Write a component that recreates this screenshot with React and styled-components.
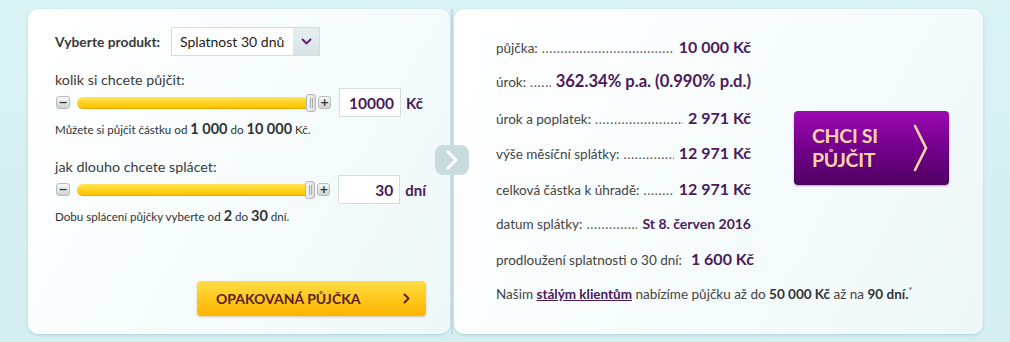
import React from 'react';
import styled, { createGlobalStyle } from 'styled-components';

const Global = createGlobalStyle`
  html, body { margin: 0; padding: 0; }
  body {
    width: 1010px;
    height: 342px;
    overflow: hidden;
    background: linear-gradient(180deg, #d9f2f4 0%, #d4eef1 100%);
    font-family: Lato, "Open Sans", sans-serif;
    color: #3a3a3a;
  }
`;

const Page = styled.div`
  display: flex;
  align-items: stretch;
  padding: 9px 0 0 28px;
  height: 325px;
`;

const Card = styled.div`
  box-sizing: border-box;
  border-radius: 10px;
  background: linear-gradient(120deg, #ffffff 0%, #f7fcfd 45%, #eef8f9 100%);
  box-shadow: 0 1px 3px rgba(40, 110, 120, 0.22);
  display: flex;
  flex-direction: column;
`;

const LeftCard = styled(Card)`
  width: 422px;
  padding: 18px 24px 18px 27px;
`;

const RightCard = styled(Card)`
  width: 529px;
  padding: 20px 0 0 42px;
`;

const Divider = styled.div`
  width: 4px;
  display: flex;
  flex-direction: column;
  align-items: center;
`;

const DividerLine = styled.div`
  width: 2px;
  background: #c6d9dc;
  flex: ${p => (p.$grow ? 1 : 'none')};
  height: ${p => (p.$grow ? 'auto' : '136px')};
`;

const Badge = styled.div`
  position: relative;
  z-index: 2;
  flex: none;
  width: 34px;
  height: 30px;
  border-radius: 8px;
  background: #c9dbde;
  display: flex;
  align-items: center;
  justify-content: center;
`;

const ProductRow = styled.div`
  display: flex;
  align-items: center;
  gap: 11px;
  height: 29px;
`;

const ProductLabel = styled.span`
  font-weight: 700;
  font-size: 13.8px;
  color: #3a3a3a;
`;

const Select = styled.div`
  box-sizing: border-box;
  width: 149px;
  height: 29px;
  border: 1px solid #d3dcdd;
  background: #fff;
  display: flex;
  align-items: stretch;
`;

const SelectText = styled.span`
  flex: 1;
  display: flex;
  align-items: center;
  padding-left: 8px;
  font-size: 14px;
  color: #222;
`;

const SelectArrow = styled.span`
  width: 26px;
  background: linear-gradient(180deg, #e6eff0 0%, #d5e3e5 100%);
  display: flex;
  align-items: center;
  justify-content: center;
`;

const FieldLabel = styled.div`
  margin-top: ${p => p.$mt}px;
  font-size: 14.3px;
  line-height: 17px;
  color: #3a3a3a;
`;

const SliderRow = styled.div`
  display: flex;
  align-items: center;
  height: 29px;
`;

const StepButton = styled.span`
  box-sizing: border-box;
  width: ${p => (p.$plus ? 13 : 14)}px;
  height: 13px;
  margin-left: ${p => (p.$plus ? 5 : 1)}px;
  border: 1px solid #b9bcbd;
  border-radius: 3px;
  background: linear-gradient(180deg, #f7f7f7 0%, #d0d2d2 100%);
  display: flex;
  align-items: center;
  justify-content: center;
  font-family: "DejaVu Sans", sans-serif;
  font-weight: 700;
  font-size: 11px;
  line-height: 1;
  color: #333;
`;

const Track = styled.div`
  position: relative;
  width: 236px;
  height: 12px;
  margin-left: 7px;
  border-radius: 6px;
  background: linear-gradient(180deg, #ffe55a 0%, #ffd21c 50%, #ffbc00 100%);
  box-shadow: inset 0 -1px 0 rgba(200, 130, 0, 0.35);
`;

const Thumb = styled.span`
  position: absolute;
  right: -3px;
  top: -3px;
  box-sizing: border-box;
  width: 10px;
  height: 18px;
  border: 1px solid #b4b7b8;
  border-radius: 3px;
  background: linear-gradient(90deg, #f4f4f4, #dcdede);
  display: flex;
  justify-content: center;
  gap: 1px;
  padding-top: 3px;
  &::before, &::after {
    content: '';
    width: 1px;
    height: 10px;
    background: #a9acad;
  }
`;

const ValueBox = styled.div`
  box-sizing: border-box;
  width: 62px;
  height: 29px;
  margin-left: 8px;
  border: 1px solid #d6dddf;
  background: #fff;
  display: flex;
  align-items: center;
  justify-content: flex-end;
  padding-right: 6px;
  font-weight: 700;
  font-size: 15.5px;
  color: #4a1a5c;
`;

const Unit = styled.span`
  margin-left: 5px;
  font-weight: 700;
  font-size: 15px;
  color: #4a1a5c;
`;

const Hint = styled.div`
  margin-top: 4px;
  font-size: 11.6px;
  line-height: 16px;
  color: #333;
  b {
    font-size: 14.5px;
    font-weight: 700;
  }
`;

const RepeatButton = styled.button`
  margin-top: auto;
  align-self: flex-end;
  width: 229px;
  height: 35px;
  border: none;
  border-radius: 4px;
  background: linear-gradient(180deg, #ffdd45 0%, #ffc61a 55%, #ffb400 100%);
  box-shadow: 0 1px 2px rgba(170, 110, 0, 0.35);
  display: flex;
  align-items: center;
  justify-content: space-between;
  padding: 0 16px 0 19px;
  font-family: Lato, "Open Sans", sans-serif;
  font-weight: 700;
  font-size: 14px;
  color: #5b1c22;
  cursor: pointer;
`;

const TopArea = styled.div`
  display: flex;
  align-items: flex-start;
`;

const Rows = styled.div`
  width: 255px;
  display: flex;
  flex-direction: column;
`;

const Row = styled.div`
  display: flex;
  align-items: baseline;
  height: 35.4px;
  line-height: 35.4px;
  white-space: nowrap;
  gap: ${p => (p.$leader ? 0 : 9)}px;
`;

const RowLabel = styled.span`
  font-size: 13.5px;
  color: #444;
`;

const Leader = styled.span`
  flex: 1;
  overflow: hidden;
  margin: 0 5px 0 4px;
  font-size: 13px;
  letter-spacing: 0.7px;
  color: #555;
  &::before {
    content: '....................................................................................................';
  }
`;

const RowValue = styled.span`
  font-weight: 700;
  font-size: ${p => (p.$small ? 14 : p.$wide ? 16.6 : 16)}px;
  color: #4a1a5c;
`;

const CtaButton = styled.button`
  margin: 82px 0 0 43px;
  width: 155px;
  height: 74px;
  border: none;
  border-radius: 4px;
  background: linear-gradient(180deg, #9c0bb0 0%, #780090 45%, #4f0062 100%);
  box-shadow: 0 1px 2px rgba(60, 0, 80, 0.35);
  display: flex;
  align-items: center;
  justify-content: space-between;
  padding: 0 20px 0 18px;
  cursor: pointer;
`;

const CtaText = styled.span`
  text-align: left;
  font-family: Lato, "Open Sans", sans-serif;
  font-weight: 700;
  font-size: 19.5px;
  line-height: 24px;
  letter-spacing: -0.3px;
  color: #ffd6a6;
`;

const Note = styled.div`
  height: 35.4px;
  line-height: 35.4px;
  white-space: nowrap;
  font-size: 13.5px;
  color: #444;
  b {
    font-weight: 700;
    color: #333;
  }
  sup {
    font-size: 9px;
    line-height: 0;
  }
`;

const NoteLink = styled.a`
  font-weight: 700;
  color: #4a1a5c;
  text-decoration: underline;
`;

const Chevron = ({ w, h, color, sw, d }) => (
  <svg width={w} height={h} viewBox={`0 0 ${w} ${h}`} fill="none">
    <polyline
      points={d}
      stroke={color}
      strokeWidth={sw}
      strokeLinecap="round"
      strokeLinejoin="round"
    />
  </svg>
);

const Slider = ({ value, unit }) => (
  <SliderRow>
    <StepButton>−</StepButton>
    <Track>
      <Thumb />
    </Track>
    <StepButton $plus>+</StepButton>
    <ValueBox>{value}</ValueBox>
    <Unit>{unit}</Unit>
  </SliderRow>
);

const rows = [
  { label: 'půjčka:', value: '10 000 Kč', leader: true },
  { label: 'úrok:', value: '362.34% p.a. (0.990% p.d.)', leader: true, wide: true },
  { label: 'úrok a poplatek:', value: '2 971 Kč', leader: true },
  { label: 'výše měsíční splátky:', value: '12 971 Kč', leader: true },
  { label: 'celková částka k úhradě:', value: '12 971 Kč', leader: true },
  { label: 'datum splátky:', value: 'St 8. červen 2016', leader: true, small: true },
  { label: 'prodloužení splatnosti o 30 dní:', value: '1 600 Kč', leader: false },
];

export default function App() {
  return (
    <>
      <Global />
      <Page>
        <LeftCard>
          <ProductRow>
            <ProductLabel>Vyberte produkt:</ProductLabel>
            <Select>
              <SelectText>Splatnost 30 dnů</SelectText>
              <SelectArrow>
                <Chevron w={11} h={7} color="#6b1f7c" sw={2} d="1.5,1.5 5.5,5.5 9.5,1.5" />
              </SelectArrow>
            </Select>
          </ProductRow>

          <FieldLabel $mt={15}>kolik si chcete půjčit:</FieldLabel>
          <Slider value="10000" unit="Kč" />
          <Hint>
            Můžete si půjčit částku od <b>1 000</b> do <b>10 000</b> Kč.
          </Hint>

          <FieldLabel $mt={20}>jak dlouho chcete splácet:</FieldLabel>
          <Slider value="30" unit="dní" />
          <Hint>
            Dobu splácení půjčky vyberte od <b>2</b> do <b>30</b> dní.
          </Hint>

          <RepeatButton>
            <span>OPAKOVANÁ PŮJČKA</span>
            <Chevron w={7} h={11} color="#5b1c22" sw={2} d="1.5,1.5 5.5,5.5 1.5,9.5" />
          </RepeatButton>
        </LeftCard>

        <Divider>
          <DividerLine />
          <Badge>
            <Chevron w={12} h={20} color="#ffffff" sw={3} d="2,2 10,10 2,18" />
          </Badge>
          <DividerLine $grow />
        </Divider>

        <RightCard>
          <TopArea>
            <Rows>
              {rows.map(r => (
                <Row key={r.label} $leader={r.leader}>
                  <RowLabel>{r.label}</RowLabel>
                  {r.leader && <Leader />}
                  <RowValue $small={r.small} $wide={r.wide}>{r.value}</RowValue>
                </Row>
              ))}
            </Rows>
            <CtaButton>
              <CtaText>
                CHCI SI
                <br />
                PŮJČIT
              </CtaText>
              <Chevron w={16} h={48} color="#ffd6a6" sw={2.6} d="2,2 13,24 2,46" />
            </CtaButton>
          </TopArea>
          <Note>
            Našim <NoteLink>stálým klientům</NoteLink> nabízíme půjčku až do <b>50 000 Kč</b> až na{' '}
            <b>90 dní.</b>
            <sup>*</sup>
          </Note>
        </RightCard>
      </Page>
    </>
  );
}
